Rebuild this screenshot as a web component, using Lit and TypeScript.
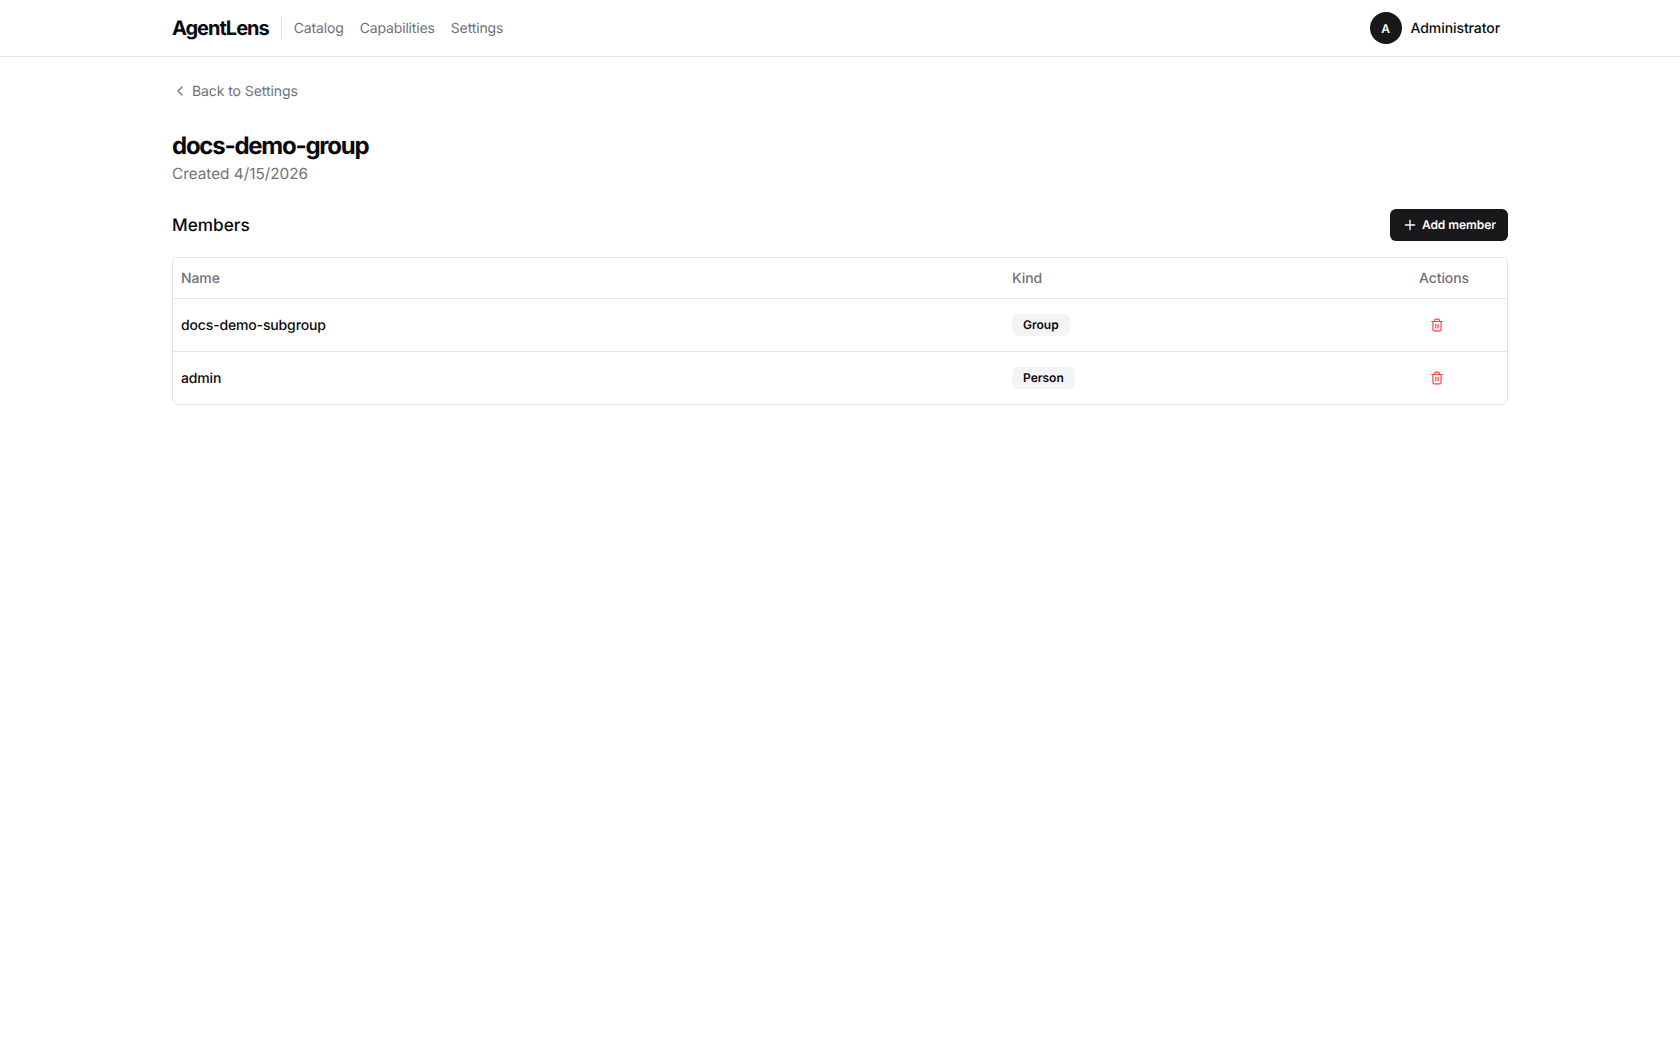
import { LitElement, html, css } from "lit";
import { customElement } from "lit/decorators.js";

const trash = html`<svg viewBox="0 0 24 24" width="14" height="14" fill="none" stroke="currentColor" stroke-width="2" stroke-linecap="round" stroke-linejoin="round"><path d="M3 6h18"/><path d="M19 6v14c0 1-1 2-2 2H7c-1 0-2-1-2-2V6"/><path d="M8 6V4c0-1 1-2 2-2h4c1 0 2 1 2 2v2"/><path d="M10 11v6"/><path d="M14 11v6"/></svg>`;

@customElement("app-root")
export class AppRoot extends LitElement {
  static styles = css`
    :host { display: block; min-height: 1050px; background: #fff; font-family: Inter, "Liberation Sans", sans-serif; color: #09090b; text-rendering: geometricPrecision; }
    .header { height: 56px; border-bottom: 1px solid #e4e4e7; }
    .wrap { max-width: 1336px; margin: 0 auto; }
    .bar { height: 56px; display: flex; align-items: center; }
    .logo { font-size: 20px; line-height: 24px; font-weight: 700; letter-spacing: -1px; }
    .sep { width: 1px; height: 24px; background: #e4e4e7; margin: 0 12px; }
    .nav { display: flex; gap: 16px; font-size: 14px; line-height: 20px; letter-spacing: -0.15px; color: #71717a; padding-top: 1px; }
    .user { margin-left: auto; display: flex; align-items: center; gap: 9px; padding-right: 8px; font-size: 14px; letter-spacing: -0.08px; font-weight: 500; }
    .avatar { width: 32px; height: 32px; border-radius: 50%; background: #18181b; color: #fafafa; display: flex; align-items: center; justify-content: center; font-size: 12px; font-weight: 600; }
    .back { display: flex; align-items: center; gap: 4px; height: 32px; margin-top: 18px; font-size: 14px; letter-spacing: -0.08px; color: #71717a; }
    .back svg { display: block; }
    h1 { margin: 23px 0 0; font-size: 24px; line-height: 32px; font-weight: 700; letter-spacing: -1.25px; }
    .created { font-size: 15.3px; line-height: 22px; color: #71717a; margin-top: 1px; }
    .section { display: flex; align-items: center; justify-content: space-between; margin-top: 24px; height: 32px; }
    h2 { margin: 0; font-size: 17.2px; font-weight: 500; }
    .add { display: flex; align-items: center; gap: 4px; height: 32px; box-sizing: border-box; padding: 0 12px; border-radius: 6px; background: #18181b; color: #fafafa; font-size: 12px; font-weight: 600; letter-spacing: -0.05px; box-shadow: 0 1px 2px rgba(0,0,0,.05); }
    .add span { padding-bottom: 1px; }
    .table { margin-top: 16px; border: 1px solid #e4e4e7; border-radius: 6px; }
    .row { display: grid; grid-template-columns: 831px 375px 128px; align-items: center; height: 53px; box-sizing: border-box; border-top: 1px solid #e4e4e7; font-size: 14px; letter-spacing: -0.15px; font-weight: 500; }
    .row.head { height: 40px; border-top: 0; color: #71717a; letter-spacing: -0.1px; }
    .row > div { padding: 0 8px; }
    .row.head .act { text-align: center; padding-left: 10px; }
    .badge { display: inline-flex; align-items: center; box-sizing: border-box; height: 22px; padding: 0 11px 1px; border-radius: 6px; background: #f4f4f5; font-size: 12px; font-weight: 600; letter-spacing: 0; }
    .del { color: #ef4444; display: flex; justify-content: center; padding-right: 20px !important; }
    .del svg { display: block; }
  `;

  render() {
    const members = [
      ["docs-demo-subgroup", "Group"],
      ["admin", "Person"],
    ];
    return html`
      <div class="header"><div class="wrap bar">
        <div class="logo">AgentLens</div>
        <div class="sep"></div>
        <div class="nav"><span>Catalog</span><span>Capabilities</span><span>Settings</span></div>
        <div class="user"><div class="avatar">A</div><span>Administrator</span></div>
      </div></div>
      <div class="wrap">
        <div class="back">
          <svg viewBox="0 0 24 24" width="16" height="16" fill="none" stroke="currentColor" stroke-width="2" stroke-linecap="round" stroke-linejoin="round"><path d="m15 18-6-6 6-6"/></svg>
          <span>Back to Settings</span>
        </div>
        <h1>docs-demo-group</h1>
        <div class="created">Created 4/15/2026</div>
        <div class="section">
          <h2>Members</h2>
          <div class="add">
            <svg viewBox="0 0 24 24" width="16" height="16" fill="none" stroke="currentColor" stroke-width="2" stroke-linecap="round" stroke-linejoin="round"><path d="M5 12h14"/><path d="M12 5v14"/></svg>
            <span>Add member</span>
          </div>
        </div>
        <div class="table">
          <div class="row head"><div>Name</div><div>Kind</div><div class="act">Actions</div></div>
          ${members.map(([n, k]) => html`<div class="row"><div>${n}</div><div><span class="badge">${k}</span></div><div class="del">${trash}</div></div>`)}
        </div>
      </div>
    `;
  }
}
